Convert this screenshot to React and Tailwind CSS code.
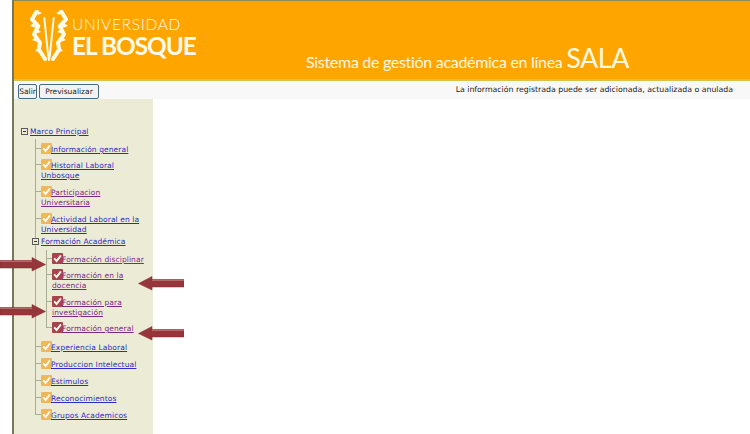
const VERDANA = { fontFamily: '"DejaVu Sans", sans-serif' };

const TOP_ITEMS_A = [
  { text: 'Información general', top: 'mt-[6px]' },
  { text: 'Historial Laboral Unbosque', top: 'mt-[4px]' },
  { text: 'Participacion Universitaria', top: 'mt-[5px]', visited: true },
  { text: 'Actividad Laboral en la Universidad', top: 'mt-[5px]' },
];

const SUB_ITEMS = [
  { text: 'Formación disciplinar', top: 'mt-[6px]' },
  { text: 'Formación en la docencia', top: 'mt-[4px]' },
  { text: 'Formación para investigación', top: 'mt-[5px]' },
  { text: 'Formación general', top: 'mt-[4px]' },
];

const TOP_ITEMS_B = [
  { text: 'Experiencia Laboral', top: 'mt-[7px]' },
  { text: 'Produccion Intelectual', top: 'mt-[5px]' },
  { text: 'Estimulos', top: 'mt-[5px]' },
  { text: 'Reconocimientos', top: 'mt-[5px]' },
  { text: 'Grupos Academicos', top: 'mt-[5px]' },
];

function CheckBox({ red }) {
  return (
    <svg width="11" height="11" viewBox="0 0 11 11" className="absolute left-0 top-0">
      <rect x="0" y="0" width="11" height="11" rx="1" fill={red ? '#a8444c' : '#efb75a'} />
      <path d="M2.2 5.4 L4.6 8 L8.9 2.4" fill="none" stroke="#fffaf0" strokeWidth="1.9" />
    </svg>
  );
}

function Minus({ className }) {
  return (
    <span className={`absolute flex h-[7px] w-[7px] items-center justify-center border border-[#5c5c5c] bg-[#ecebd6] ${className}`}>
      <span className="h-[1px] w-[3px] bg-[#333]" />
    </span>
  );
}

function TreeItem({ item, red, width }) {
  return (
    <div className={`relative pt-[2px] indent-[10px] text-[7.5px] leading-[10px] tracking-[0.1px] ${width} ${item.top}`}>
      <span className="absolute left-[-6px] top-[5px] h-[1px] w-[6px] bg-[#a9ad93]" />
      <CheckBox red={red} />
      <a
        href="#"
        className={`relative underline ${red || item.visited ? 'text-[#7b2a82]' : 'text-[#2c2cc4]'}`}
      >
        {item.text}
      </a>
    </div>
  );
}

function Arrow({ flip, className }) {
  return (
    <svg
      width="46"
      height="15"
      viewBox="0 0 46 15"
      className={`absolute ${flip ? '-scale-x-100' : ''} ${className}`}
    >
      <path d="M0 3.5 L32 3.5 L32 0.5 L45.5 7.5 L32 14 L32 11 L0 11 Z" fill="#97363a" stroke="#7e2a2e" strokeWidth="0.5" />
      <path d="M0 4.5 L32 4.5" stroke="#b9686a" strokeWidth="1" />
    </svg>
  );
}

function Logo() {
  const branch = 'M6.7 1.5 L2 9.3 L8.3 16 L4 24.3 L10 32.7 L8.8 39.3 L15 49';
  const mirrored = 'M31.3 1.5 L36 9.3 L29.7 16 L34 24.3 L28 32.7 L29.2 39.3 L23 49';
  return (
    <svg width="38" height="52" viewBox="0 0 38 52" className="shrink-0">
      <g fill="none" stroke="#fffbe8" strokeLinejoin="round" strokeLinecap="round">
        <path d="M14.3 8 L18 44 L19 50 L20 44 L23.7 8" strokeWidth="2" />
        <path d={branch} strokeWidth="4" />
        <path d={mirrored} strokeWidth="4" />
      </g>
      <g fill="#fffbe8">
        <path d="M6 0 L12 3 L8 5 Z" />
        <path d="M32 0 L26 3 L30 5 Z" />
        <path d="M0 16 L5 12 L6 18 Z" />
        <path d="M38 16 L33 12 L32 18 Z" />
        <path d="M11 22 L6 18 L5 24 Z" />
        <path d="M27 22 L32 18 L33 24 Z" />
        <path d="M2 30 L7 26 L8 32 Z" />
        <path d="M36 30 L31 26 L30 32 Z" />
        <path d="M5 41 L10 36 L11 42 Z" />
        <path d="M33 41 L28 36 L27 42 Z" />
      </g>
    </svg>
  );
}

export default function App() {
  return (
    <div className="relative flex h-[434px] w-[750px] overflow-hidden bg-white">
      <div className="w-[12px] shrink-0 bg-white" />
      <div className="flex flex-1 flex-col border-l-2 border-[#77775a]">
        <header className="h-[81px] shrink-0 border-b-2 border-t border-b-[#d6c24c] border-t-[#8c8c5c] bg-[#ffa500]">
          <div className="flex h-full items-start" style={{ fontFamily: 'Lato, sans-serif' }}>
            <div className="ml-[16px] mt-[9px]">
              <Logo />
            </div>
            <div className="ml-[4px] mt-[14px] w-[124px] whitespace-nowrap text-[#fffbe8]">
              <div className="text-[15.5px] font-light leading-[18px] tracking-[0.7px]">UNIVERSIDAD</div>
              <div className="text-[24.4px] font-bold leading-[26px] tracking-[-1px]">EL BOSQUE</div>
            </div>
            <div className="ml-[110px] mt-[42px] whitespace-nowrap text-[16px] leading-[30px] tracking-[-0.3px] text-[#fff8e0]">
              Sistema de gestión académica en línea <span className="text-[27px] tracking-[-0.5px]">SALA</span>
            </div>
          </div>
        </header>

        <div className="flex h-[18px] shrink-0 items-start justify-between bg-[#f8f8f8] pl-[4px] pr-[17px]" style={VERDANA}>
          <div className="mt-[3px] flex gap-[2px] text-[7.5px] text-[#222]">
            <button className="h-[15px] w-[19px] rounded-[2px] border border-[#4a6a80] bg-[#f2f2f2] p-0">Salir</button>
            <button className="h-[15px] w-[60px] rounded-[2px] border border-[#4a6a80] bg-[#f2f2f2] p-0">Previsualizar</button>
          </div>
          <div className="mt-[4px] text-[7.8px] leading-[10px] text-[#222]">
            La información registrada puede ser adicionada, actualizada o anulada
          </div>
        </div>

        <aside className="h-full w-[139px] bg-[#ecebd6] pl-[7px] pt-[28px]" style={VERDANA}>
          <div className="relative pl-[9px] text-[7.5px] leading-[10px] tracking-[0.1px]">
            <Minus className="left-0 top-[1px]" />
            <a href="#" className="text-[#2c2cc4] underline">Marco Principal</a>
          </div>

          <div className="relative ml-[20px]">
            <span className="absolute bottom-[6px] left-[-6px] top-[-4px] w-[1px] bg-[#a9ad93]" />
            {TOP_ITEMS_A.map((item) => (
              <TreeItem key={item.text} item={item} width="w-[100px]" />
            ))}

            <div className="relative mt-[2px] text-[7.5px] leading-[10px] tracking-[0.1px]">
              <Minus className="left-[-9px] top-[1px]" />
              <a href="#" className="text-[#2c2cc4] underline">Formación Académica</a>
            </div>

            <div className="relative ml-[11px]">
              <span className="absolute bottom-[6px] left-[-6px] top-[-3px] w-[1px] bg-[#a9ad93]" />
              {SUB_ITEMS.map((item) => (
                <TreeItem key={item.text} item={item} red width="w-[96px]" />
              ))}
            </div>

            {TOP_ITEMS_B.map((item) => (
              <TreeItem key={item.text} item={item} width="w-[100px]" />
            ))}
          </div>
        </aside>
      </div>

      <Arrow className="left-0 top-[257px]" />
      <Arrow flip className="left-[138px] top-[276px]" />
      <Arrow className="left-0 top-[304px]" />
      <Arrow flip className="left-[138px] top-[326px]" />
    </div>
  );
}
